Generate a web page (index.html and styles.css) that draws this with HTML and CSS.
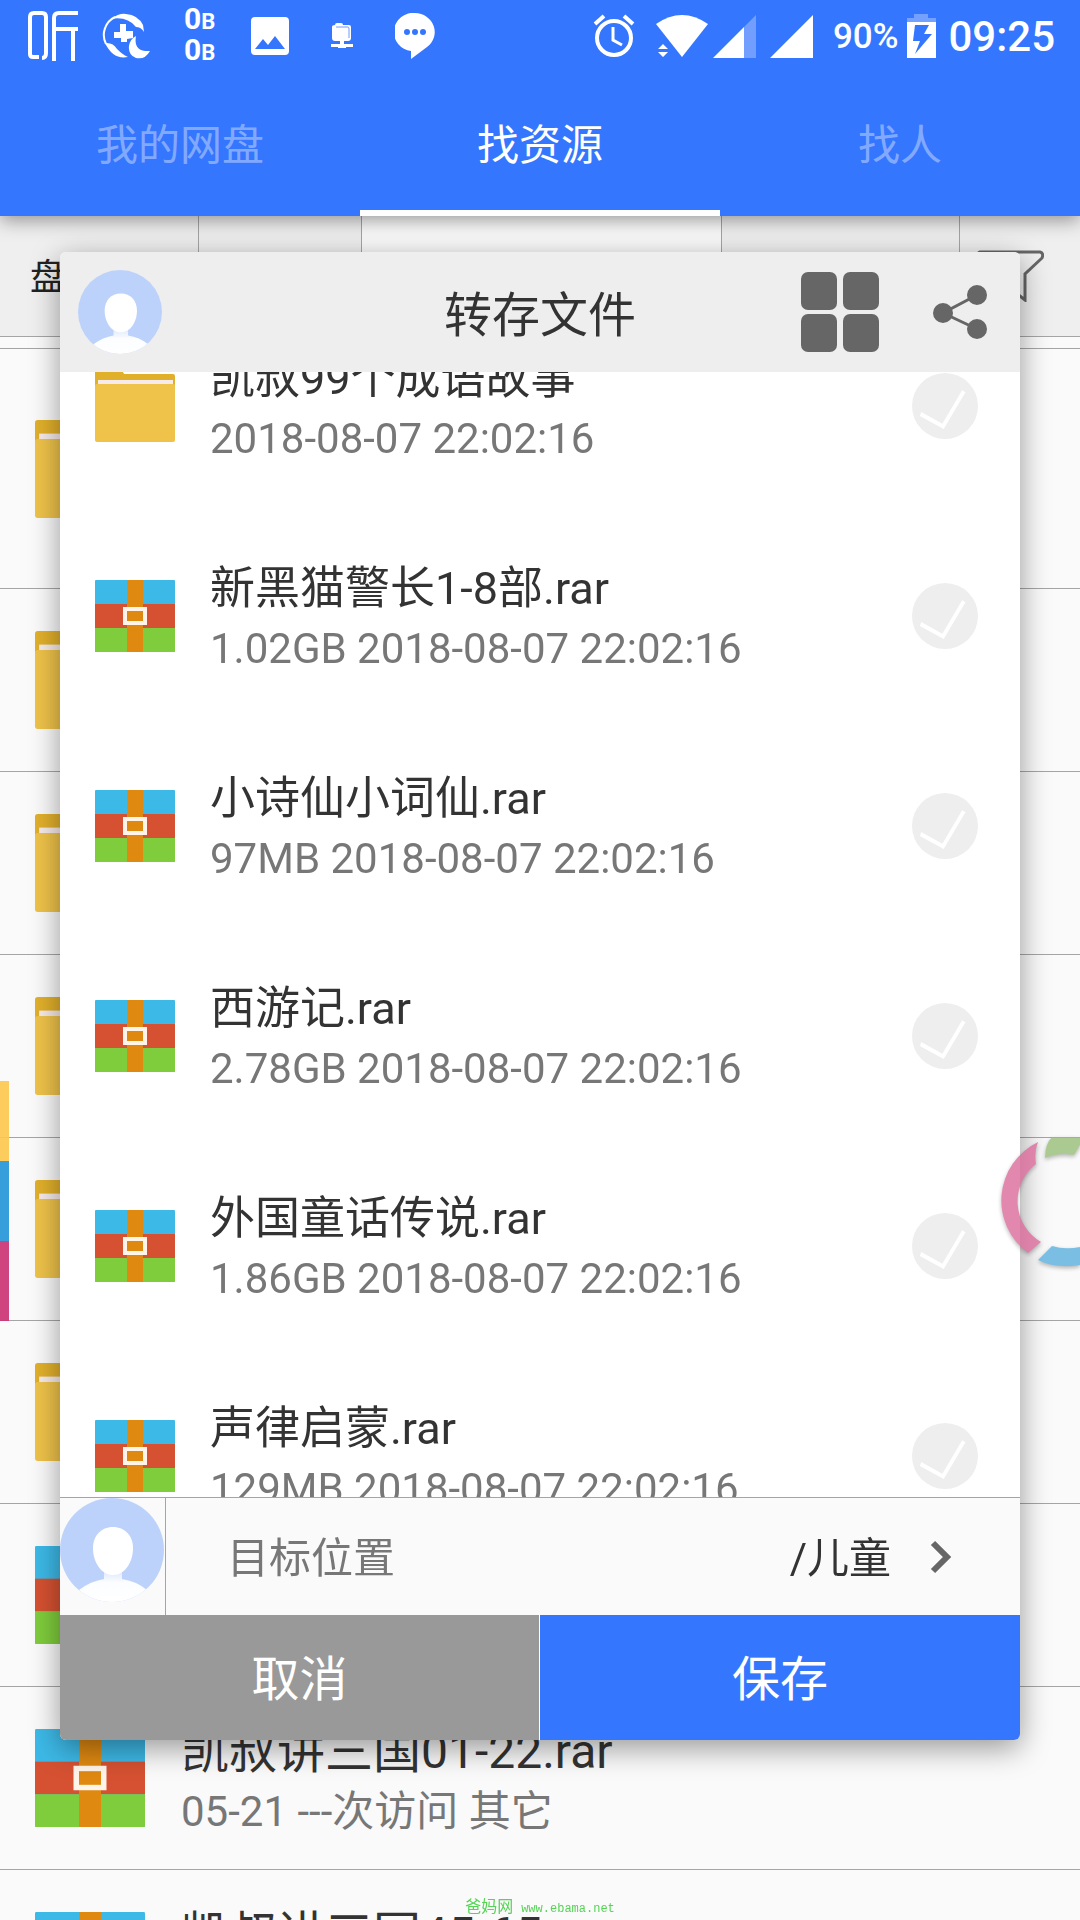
FILE: index.html
```html
<!DOCTYPE html>
<html lang="zh-CN">
<head>
<meta charset="utf-8">
<meta name="viewport" content="width=device-width, initial-scale=1">
<title>转存文件</title>
<link rel="stylesheet" href="styles.css">
</head>
<body>
<svg class="defs" width="0" height="0" aria-hidden="true">
  <defs>
    <linearGradient id="bust" x1="0" y1="0" x2="0" y2="1"><stop offset="0" stop-color="#dbe7fc"/><stop offset=".4" stop-color="#fbfdff"/><stop offset="1" stop-color="#fff"/></linearGradient>
    <clipPath id="round"><circle cx="52" cy="52" r="52"/></clipPath>
  </defs>
  <symbol id="rar" viewBox="0 0 80 72" preserveAspectRatio="none">
    <rect width="80" height="72" rx="1" fill="#3db9e7"/>
    <rect y="24" width="80" height="24" fill="#d55131"/>
    <path d="M0 48h80v23q0 1-1 1H1q-1 0-1-1z" fill="#7fcc3c"/>
    <rect x="32" width="16" height="72" fill="#df8911"/>
    <rect x="30" y="29" width="20" height="14" fill="none" stroke="#fff4ea" stroke-width="4"/>
  </symbol>
  <symbol id="folder" viewBox="0 0 80 72" preserveAspectRatio="none">
    <path d="M2 0h25l2 4h49q2 0 2 2v20H0V2q0-2 2-2z" fill="#e1b02b"/>
    <rect x="3" y="10" width="75" height="8" fill="#f6eaea"/>
    <path d="M2 14h76q2 0 2 2v54q0 2-2 2H2q-2 0-2-2V16q0-2 2-2z" fill="#efc34a"/>
  </symbol>
  <symbol id="avatar" viewBox="0 0 104 104">
    <g clip-path="url(#round)">
      <rect width="104" height="104" fill="#bdd2fb"/>
      <path d="M19 92q12-9 25-11v-9h18v9q14 2 25 11l-8 12H27z" fill="url(#bust)"/>
      <path d="M53 29c12 0 20 9 20 21 0 14-8 27-20 27S33 64 33 50c0-12 8-21 20-21z" fill="#fff"/>
    </g>
  </symbol>
</svg>

<div class="page">
  <header class="app-bar">
    <div class="status">
      <div class="status-left">
        <svg width="50" height="51" viewBox="0 0 50 51" fill="none" stroke="#fff" stroke-width="4"><path d="M11 46H5q-3 0-3-3V6q0-4 4-4h8q4 0 4 4v36q0 5-4 5M50 2H31q-5 0-5 5v43M28 18h22M45 19v31"/></svg>
        <svg class="moon" width="48" height="46" viewBox="0 0 48 46"><path d="M4 31A20 20 0 0 1 13 4" fill="none" stroke="#fff" stroke-width="2"/><path d="M9 6Q17 0 24 1q12 1 17 11l1 7q-3-5-8-5Q25 3 9 6zM3 30q8-1 12 6 6 6 11 8-15 3-23-14z" fill="#fff"/><path d="M18 11h6v7h7v7l-6 1v3h-6v-4h-7v-6h6z" fill="#fff"/><path d="M34 23q-3 16 14 15-5 9-14 7-8-3-7-12 1-7 7-10z" fill="#fff"/></svg>
        <div class="traffic"><span>0<small>B</small></span><span>0<small>B</small></span></div>
        <svg class="photo" width="38" height="38" viewBox="0 0 38 38"><path fill-rule="evenodd" d="M4 0h30q4 0 4 4v30q0 4-4 4H4q-4 0-4-4V4q0-4 4-4zM4 32h30L24 19l-7 9-5-6z" fill="#fff"/></svg>
        <svg class="zip" width="22" height="26" viewBox="0 0 22 26"><path d="M1 4q0-2 3-2 0-2 2-2h4q2 0 2 2h6q2 0 2 2v11q0 3-3 3h-4v3h9v3h-7v1H7v-1H0v-3h9v-3H4q-3 0-3-3z" fill="#fff"/><path d="M5 4h12q1 0 1 2v9" fill="none" stroke="#6c9bff"/></svg>
        <svg width="40" height="46" viewBox="0 0 40 46"><path d="M20 0a20 19 0 0 1 12 34L16 46v-8A19 19 0 0 1 20 0z" fill="#fff"/><g fill="#3576ff"><circle cx="12" cy="19" r="3"/><circle cx="20" cy="19" r="3"/><circle cx="28" cy="19" r="3"/></g></svg>
      </div>
      <div class="status-right">
        <svg width="42" height="44" viewBox="0 0 42 44" fill="none" stroke="#fff" stroke-width="4"><circle cx="21" cy="24" r="17"/><path d="M2 10l9-8M31 2l9 8"/><path d="M20 13v13l9 5" stroke-width="3"/></svg>
        <svg class="wifi" width="52" height="42" viewBox="0 0 52 42" fill="#fff"><path d="M0 9Q26-9 52 9L26 42z"/><path d="M2 34l5-5 5 5zM2 37h10l-5 5z"/></svg>
        <svg width="43" height="43" viewBox="0 0 43 43" fill="#fff"><path d="M43 0v43H31V12z" opacity=".3"/><path d="M31 12v31H0z"/></svg>
        <svg class="signal" width="43" height="43" viewBox="0 0 43 43" fill="#fff"><path d="M43 0v43H0z"/></svg>
        <span class="percent">90%</span>
        <svg width="29" height="44" viewBox="0 0 29 44"><path d="M7 0h14v4h8v5H0V4h7z" fill="#74a0ff"/><path fill-rule="evenodd" d="M0 8h29v36H0zM8 11L6 27h7l-5 13 17-20h-8l5-9z" fill="#fff"/></svg>
        <time class="clock">09:25</time>
      </div>
    </div>
    <nav class="tabs">
      <a href="#disk">我的网盘</a>
      <a href="#find" class="active" aria-current="page">找资源</a>
      <a href="#people">找人</a>
    </nav>
  </header>

  <div class="filters">
    <div class="filter first">盘</div>
    <div class="filter"></div>
    <div class="filter current"></div>
    <div class="filter"></div>
    <div class="filter last"><svg width="68" height="52" viewBox="0 0 68 52" fill="none" stroke="#666" stroke-width="3"><path d="M4 2h60q4 1 2 6L49 24v26l-18-14V24L2 8q-1-5 2-6z"/></svg></div>
  </div>

  <ul class="results">
    <li class="tall"><svg class="thumb"><use href="#folder"/></svg></li>
    <li><svg class="thumb"><use href="#folder"/></svg></li>
    <li><svg class="thumb"><use href="#folder"/></svg></li>
    <li><svg class="thumb"><use href="#folder"/></svg></li>
    <li><svg class="thumb"><use href="#folder"/></svg></li>
    <li><svg class="thumb"><use href="#folder"/></svg></li>
    <li><svg class="thumb"><use href="#rar"/></svg></li>
    <li><svg class="thumb"><use href="#rar"/></svg><div class="info"><div class="name">凯叔讲三国01-22.rar</div><div class="meta">05-21 ---次访问 其它</div></div></li>
    <li><svg class="thumb"><use href="#rar"/></svg><div class="info"><div class="name">凯叔讲三国45-65</div></div></li>
  </ul>
</div>

<div class="overlay">
  <section class="dialog" role="dialog" aria-labelledby="dialog-title">
    <header class="dialog-head">
      <svg class="face" width="84" height="84"><use href="#avatar"/></svg>
      <h1 id="dialog-title">转存文件</h1>
      <div class="tools">
        <button type="button" aria-label="网格视图"><svg width="78" height="80" viewBox="0 0 78 80" fill="#666"><rect width="36" height="38" rx="7"/><rect x="42" width="36" height="38" rx="7"/><rect y="42" width="36" height="38" rx="7"/><rect x="42" y="42" width="36" height="38" rx="7"/></svg></button>
        <button type="button" aria-label="分享"><svg width="54" height="54" viewBox="0 0 54 54" fill="#666"><path d="M44 10L10 28l34 16" fill="none" stroke="#666" stroke-width="3"/><circle cx="10" cy="28" r="10"/><circle cx="44" cy="10" r="10"/><circle cx="44" cy="44" r="10"/></svg></button>
      </div>
    </header>
    <div class="viewport">
      <ul class="files">
        <li><svg class="icon"><use href="#folder"/></svg><label for="f1"><span class="name">凯叔99个成语故事</span><span class="meta">2018-08-07 22:02:16</span></label><input type="checkbox" id="f1"></li>
        <li><svg class="icon"><use href="#rar"/></svg><label for="f2"><span class="name">新黑猫警长1-8部.rar</span><span class="meta">1.02GB 2018-08-07 22:02:16</span></label><input type="checkbox" id="f2"></li>
        <li><svg class="icon"><use href="#rar"/></svg><label for="f3"><span class="name">小诗仙小词仙.rar</span><span class="meta">97MB 2018-08-07 22:02:16</span></label><input type="checkbox" id="f3"></li>
        <li><svg class="icon"><use href="#rar"/></svg><label for="f4"><span class="name">西游记.rar</span><span class="meta">2.78GB 2018-08-07 22:02:16</span></label><input type="checkbox" id="f4"></li>
        <li><svg class="icon"><use href="#rar"/></svg><label for="f5"><span class="name">外国童话传说.rar</span><span class="meta">1.86GB 2018-08-07 22:02:16</span></label><input type="checkbox" id="f5"></li>
        <li><svg class="icon"><use href="#rar"/></svg><label for="f6"><span class="name">声律启蒙.rar</span><span class="meta">129MB 2018-08-07 22:02:16</span></label><input type="checkbox" id="f6"></li>
      </ul>
    </div>
    <div class="target">
      <div class="owner"><svg width="104" height="104"><use href="#avatar"/></svg></div>
      <button type="button" class="path"><span class="hint">目标位置</span><span class="folder">/儿童</span><svg width="22" height="34" viewBox="0 0 22 34" fill="none" stroke="#666" stroke-width="6"><path d="M3 3l14 14L3 31"/></svg></button>
    </div>
    <div class="actions">
      <button type="button" class="cancel">取消</button>
      <button type="button" class="save">保存</button>
    </div>
  </section>
</div>

<div class="edge-bars"><i></i><i></i><i></i></div>
<svg class="ring" width="84" height="140" viewBox="2 -1 84 140" aria-hidden="true">
  <path d="M44 9A65 65 0 0 0 34 120l13-11A47 47 0 0 1 42 31q-2-12 2-22z" fill="#db6b9a"/>
  <path d="M58 4h28v8l-6 10q-14-3-29 3 0-14 7-21z" fill="#98bf78"/>
  <path d="M44 127l14-14q13 4 28 1v18q-24 4-42-5z" fill="#5cb0df"/>
</svg>
<div class="watermark">爸妈网 <span>www.ebama.net</span></div>
</body>
</html>
```
FILE: styles.css
```css
* { box-sizing: border-box; }
body {
  margin: 0;
  background: #fafafa;
  color: #333;
  font-family: Roboto, "Noto Sans CJK SC", sans-serif;
  font-size: 42px;
}
ul { list-style: none; margin: 0; padding: 0; }
button { border: 0; padding: 0; background: none; font: inherit; color: inherit; cursor: pointer; }
svg { display: block; flex: none; }
.defs { position: absolute; }

.page { height: 100vh; overflow: hidden; display: flex; flex-direction: column; }

.app-bar {
  flex: none;
  position: relative;
  background: #3576ff;
  color: #fff;
  box-shadow: 0 4px 18px rgba(0, 0, 0, .4);
}
.status { height: 72px; padding: 0 25px 0 28px; display: flex; justify-content: space-between; align-items: center; }
.status-left, .status-right { display: flex; align-items: center; }
.moon { margin-left: 24px; }
.traffic {
  width: 29px;
  margin-left: 34px;
  font-family: "Liberation Sans Narrow", Roboto, sans-serif;
  font-size: 30px;
  font-weight: 700;
  line-height: 28px;
  display: grid;
}
.traffic span { white-space: nowrap; }
.traffic small { font-size: 22px; }
.photo { margin: 0 42px 0 38px; }
.zip { margin-right: 42px; }
.wifi { margin: 0 5px 0 21px; }
.signal { margin: 0 20px 0 14px; }
.percent { font-size: 35px; font-weight: 500; margin-right: 9px; }
.clock { font-weight: 500; margin-left: 12px; }

.tabs { display: grid; grid-template-columns: repeat(3, 1fr); height: 144px; }
.tabs a {
  display: flex;
  align-items: center;
  justify-content: center;
  border-bottom: 6px solid transparent;
  color: rgba(255, 255, 255, .4);
  text-decoration: none;
}
.tabs .active { color: #fff; border-bottom-color: #fff; }

.filters {
  flex: none;
  display: grid;
  grid-template-columns: 199px 163px 360px 238px 1fr;
  height: 121px;
  background: #efefef;
  border-bottom: 1px solid #a5a5a5;
}
.filter { border-right: 1px solid #a5a5a5; display: flex; align-items: center; color: #222; font-size: 36px; }
.filter.first { padding: 0 0 4px 30px; }
.filter.current { background: #fafafa; }
.filter.last { border: 0; justify-content: center; padding-right: 20px; }

.results { flex: none; margin-top: 11px; border-top: 1px solid #a5a5a5; }
.results li {
  height: 183px;
  border-bottom: 1px solid #a5a5a5;
  display: flex;
  align-items: center;
  gap: 36px;
  padding: 0 35px;
}
.results .tall { height: 240px; }
.thumb { width: 110px; height: 98px; }
.info { height: 120px; }
.info .name { padding-top: 4px; font-size: 48px; line-height: 60px; white-space: nowrap; }
.meta { font-size: 42px; line-height: 60px; color: #777; }

.overlay { position: fixed; inset: 72px 0 0; padding: 180px 60px; }
.dialog {
  height: 100%;
  display: flex;
  flex-direction: column;
  border-radius: 6px;
  overflow: hidden;
  background: #fff;
  box-shadow: 0 8px 30px rgba(0, 0, 0, .4);
}
.dialog-head {
  flex: none;
  height: 120px;
  padding: 0 18px;
  background: #eee;
  display: grid;
  grid-template-columns: 1fr auto 1fr;
  align-items: center;
}
.dialog-head h1 { margin: 0; padding-top: 8px; font-size: 48px; font-weight: 400; line-height: 60px; }
.tools { display: flex; align-items: center; justify-content: flex-end; gap: 54px; padding-right: 15px; }

.viewport { flex: 1; min-height: 0; overflow: hidden; }
.files { margin-top: -71px; }
.files li { height: 210px; display: flex; align-items: center; padding: 0 42px 0 35px; }
.icon { width: 80px; height: 72px; }
.files label { flex: 1; margin-left: 35px; padding-top: 6px; display: grid; white-space: nowrap; }
.files .name { font-size: 45px; line-height: 60px; }
.files input {
  appearance: none;
  flex: none;
  width: 66px;
  height: 66px;
  margin: 0;
  border-radius: 50%;
  background: #eee;
  display: grid;
}
.files input::before {
  content: "";
  background: #fff;
  clip-path: polygon(14% 59%, 46% 77%, 76% 26%, 81% 29%, 48% 85%, 12% 65%);
}

.target { flex: none; height: 118px; display: flex; background: #fafafa; border-top: 1px solid #a5a5a5; }
.owner { border-right: 1px solid #a5a5a5; padding-right: 1px; }
.path { flex: 1; display: flex; align-items: center; padding: 0 68px 0 61px; }
.path svg { margin-left: 39px; }
.hint, .folder { padding-bottom: 5px; }
.hint { color: #777; margin-right: auto; }

.actions { flex: none; display: grid; grid-template-columns: 1fr 1fr; height: 125px; }
.actions button { color: #fff; font-size: 48px; padding-bottom: 6px; }
.cancel { background: #999; border-right: 1px solid #fff; }
.save { background: #3576ff; }

.edge-bars { position: fixed; left: 0; top: 1081px; width: 9px; opacity: .92; }
.edge-bars i { display: block; height: 80px; background: #fcc94f; }
.edge-bars i:nth-child(2) { background: #2596d8; }
.edge-bars i:nth-child(3) { background: #cb3573; }
.ring { position: fixed; right: 0; top: 1132px; opacity: .8; filter: drop-shadow(0 2px 2px rgba(0, 0, 0, .35)); }

.watermark {
  position: fixed;
  bottom: 0;
  left: 0;
  right: 0;
  text-align: center;
  font-size: 16px;
  line-height: 22px;
  color: #55d455;
}
.watermark span { margin-left: 4px; font-family: "Liberation Mono", monospace; font-size: 12px; }
```
